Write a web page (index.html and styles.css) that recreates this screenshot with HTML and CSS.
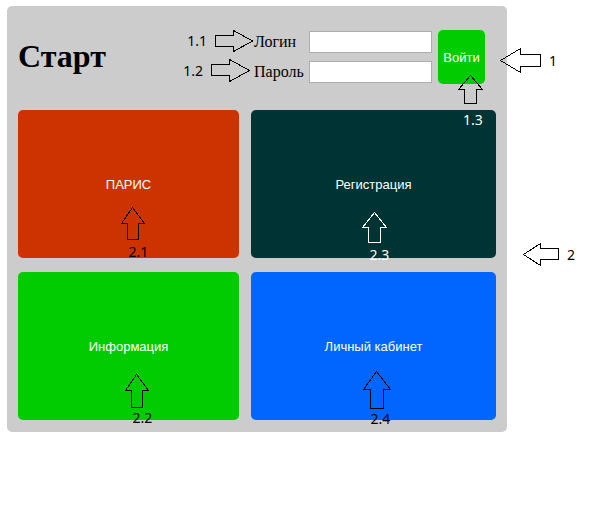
FILE: index.html
```html
<!DOCTYPE html>
<html lang="ru">
<head>
<meta charset="utf-8">
<title>Старт</title>
<link rel="stylesheet" href="styles.css">
</head>
<body>
<main class="panel">
  <header class="header">
    <h1 class="title">Старт</h1>
    <form class="login">
      <div class="fields">
        <div class="field">
          <label for="login">Логин</label>
          <input id="login" type="text">
          <div class="note note-side note-login">
            <span>1.1</span>
            <svg width="38" height="22"><path d="M.5 5.5H18.5V.5L37.5 11L18.5 21.5V16.5H.5Z"/></svg>
          </div>
        </div>
        <div class="field">
          <label for="password">Пароль</label>
          <input id="password" type="password">
          <div class="note note-side note-password">
            <span>1.2</span>
            <svg width="39" height="23"><path d="M.5 5.5H18.5V.5L38.5 11.5L18.5 22.5V16.5H.5Z"/></svg>
          </div>
        </div>
      </div>
      <div class="submit">
        <button class="enter" type="button">Войти</button>
        <div class="note note-up note-enter">
          <svg width="25" height="29"><path d="M12.5 .5L24.5 14.5H18.5V28.5H6.5V14.5H.5Z"/></svg>
          <span>1.3</span>
        </div>
      </div>
    </form>
  </header>

  <section class="tiles">
    <div class="cell">
      <button class="tile tile-red" type="button">ПАРИС</button>
      <div class="note note-up note-paris">
        <svg width="24" height="33"><path d="M11.5 .5L23.5 16.5H17.5V32.5H6.5V16.5H.5Z"/></svg>
        <span>2.1</span>
      </div>
    </div>
    <div class="cell">
      <button class="tile tile-dark" type="button">Регистрация</button>
      <div class="note note-up note-light note-register">
        <svg width="25" height="31"><path d="M12.5 .5L24.5 15.5H18.5V30.5H6.5V15.5H.5Z"/></svg>
        <span>2.3</span>
      </div>
    </div>
    <div class="cell">
      <button class="tile tile-green" type="button">Информация</button>
      <div class="note note-up note-low note-info">
        <svg width="24" height="34"><path d="M11.5 .5L23.5 16.5H17.5V33.5H6.5V16.5H.5Z"/></svg>
        <span>2.2</span>
      </div>
    </div>
    <div class="cell">
      <button class="tile tile-blue" type="button">Личный кабинет</button>
      <div class="note note-up note-low note-account">
        <svg width="28" height="38"><path d="M13.5 .5L27.5 18.5H20.5V37.5H7.5V18.5H.5Z"/></svg>
        <span>2.4</span>
      </div>
    </div>
  </section>

  <div class="note note-side note-top">
    <svg width="41" height="25"><path d="M40.5 6.5H20.5V.5L.5 12.5L20.5 24.5V18.5H40.5Z"/></svg>
    <span>1</span>
  </div>
  <div class="note note-side note-grid">
    <svg width="36" height="23"><path d="M35.5 5.5H17.5V.5L.5 11.5L17.5 22.5V16.5H35.5Z"/></svg>
    <span>2</span>
  </div>
</main>
</body>
</html>
```
FILE: styles.css
```css
* {
  box-sizing: border-box;
}

body {
  min-height: 100vh;
  margin: 0;
  padding: 6px 104px 0 7px;
  background: #fff;
  color: #000;
  font: 16px/20px "Liberation Serif", serif;
}

.panel {
  position: relative;
  padding: 24px 11px 12px;
  border-radius: 5px;
  background: #ccc;
}

.header {
  display: flex;
  align-items: center;
  justify-content: space-between;
  margin-bottom: 26px;
  padding-right: 11px;
}

.title {
  margin: 0;
  padding-bottom: 2px;
  font-size: 32px;
  line-height: 36px;
}

.login {
  display: flex;
  gap: 6px;
}

.fields {
  display: grid;
  gap: 8px;
  padding: 1px 0;
}

.field {
  position: relative;
  display: grid;
  grid-template-columns: 55px 123px;
  align-items: center;
}

.field input {
  width: 100%;
  height: 22px;
  padding: 1px 4px;
  border: 1px solid #abadb3;
  background: #fff;
  font: 13px "Liberation Sans", sans-serif;
}

.submit,
.cell {
  position: relative;
}

.enter,
.tile {
  padding: 2px 0 0;
  border: 0;
  border-radius: 5px;
  color: #fff;
  font: 13px/16px "Liberation Sans", sans-serif;
}

.enter {
  width: 47px;
  height: 100%;
  background: #0c0;
}

.tiles {
  display: grid;
  grid-template-columns: 221fr 245fr;
  gap: 14px 12px;
}

.tile {
  display: block;
  width: 100%;
  height: 148px;
}

.tile-red { background: #c30; }
.tile-dark { background: #033; }
.tile-green { background: #0c0; }
.tile-blue { background: #06f; }

/* Numbered callouts drawn over the interface */
.note {
  position: absolute;
  z-index: 1;
  display: flex;
  font: 14px/14px "Noto Sans", sans-serif;
  pointer-events: none;
}

.note svg {
  display: block;
  flex: none;
  fill: none;
  stroke: #000;
  shape-rendering: crispEdges;
}

.note-side {
  align-items: center;
  gap: 8px;
}

.note-up {
  flex-direction: column;
  gap: 5px;
}

.note-up span {
  margin-left: 8px;
}

.note-low {
  gap: 3px;
}

.note-light {
  color: #fff;
}

.note-light svg {
  stroke: #fff;
}

.note-login {
  top: -1px;
  right: calc(100% + 1px);
}

.note-password {
  top: -2px;
  right: calc(100% + 4px);
}

.note-enter {
  top: 45px;
  left: 20px;
  gap: 9px;
}

.note-enter span {
  margin-left: 5px;
  color: #fff;
}

.note-paris {
  top: 97px;
  left: calc(50% - 8px);
}

.note-register {
  top: 102px;
  left: calc(50% - 12px);
}

.note-info {
  top: 102px;
  left: calc(50% - 4px);
}

.note-account {
  top: 99px;
  left: calc(50% - 11px);
}

.note-top {
  top: 42px;
  left: calc(100% - 7px);
}

.note-grid {
  top: 237px;
  left: calc(100% + 16px);
}
```
